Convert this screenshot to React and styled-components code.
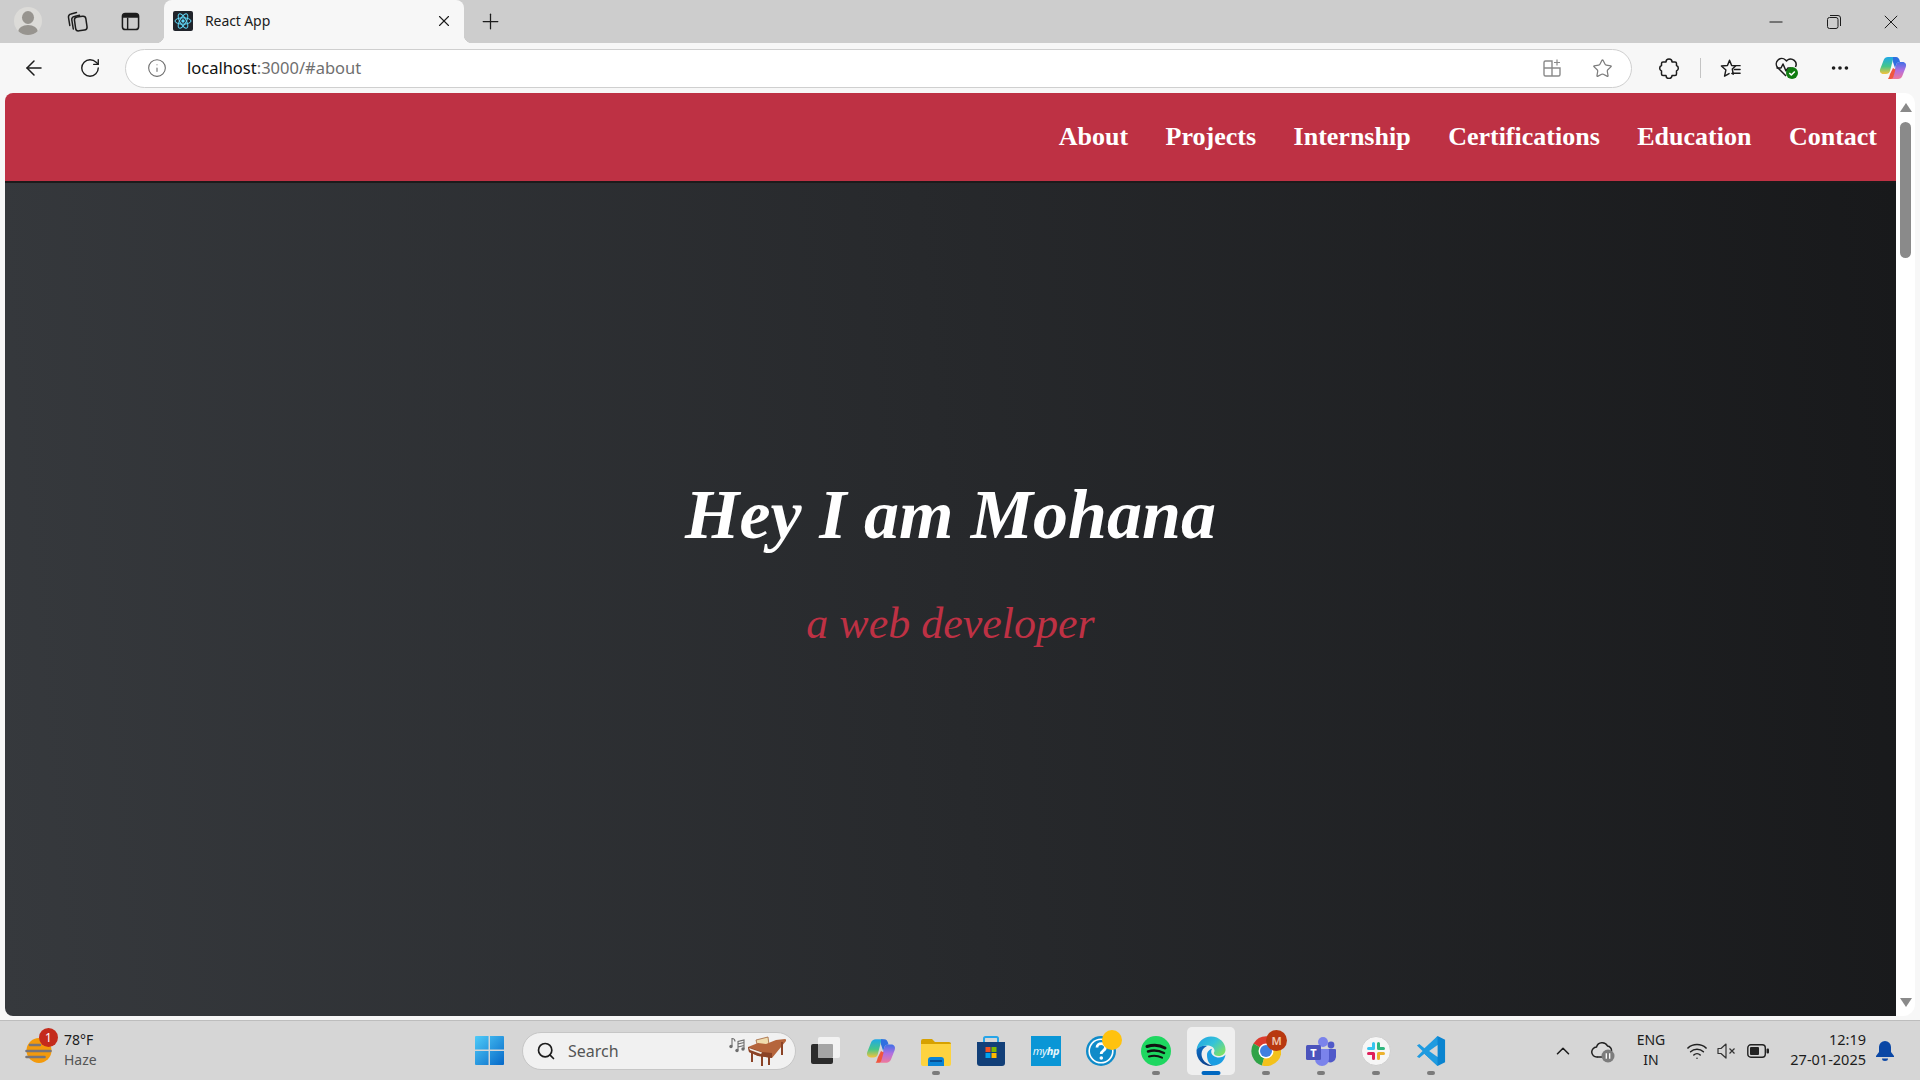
import React from "react";
import styled, { createGlobalStyle } from "styled-components";
import {
  ArrowLeft,
  RotateCw,
  Info,
  Star,
  X,
  Plus,
  Ellipsis,
  Search,
  ChevronUp,
  Wifi,
} from "lucide-react";

const RED = "#be3144";
const UI_FONT = `"Noto Sans", "Open Sans", sans-serif`;
const PAGE_FONT = `"Liberation Serif", "Times New Roman", serif`;

const GlobalStyle = createGlobalStyle`
  html, body, #root {
    margin: 0;
    height: 100%;
    overflow: hidden;
  }
  * { box-sizing: border-box; }
`;

const NAV_LINKS = ["About", "Projects", "Internship", "Certifications", "Education", "Contact"];

const Screen = styled.div`
  display: flex;
  flex-direction: column;
  width: 1920px;
  height: 1080px;
  background: #f7f7f7;
  font-family: ${UI_FONT};
  color: #1c1c1c;
`;

/* browser chrome */
const TabStrip = styled.div`
  display: flex;
  align-items: center;
  height: 43px;
  padding-left: 8px;
  background: #cdcdcd;
  flex-shrink: 0;
`;

const StripButton = styled.div`
  display: flex;
  align-items: center;
  justify-content: center;
  width: ${p => p.$w || 53}px;
  height: 43px;
  padding-bottom: 1px;
`;

const Avatar = styled.div`
  width: 28px;
  height: 28px;
  border-radius: 50%;
  background: #dcdbd8;
  overflow: hidden;
`;

const AvatarHead = styled.div`
  width: 12px;
  height: 13px;
  margin: 4px auto 1px;
  border-radius: 50%;
  background: #97948f;
`;

const AvatarBody = styled.div`
  width: 20px;
  height: 14px;
  margin: 0 auto;
  border-radius: 50%;
  background: #97948f;
`;

const Tab = styled.div`
  position: relative;
  display: flex;
  align-items: center;
  width: 300px;
  height: 43px;
  margin-left: 10px;
  padding: 0 11px 2px 9px;
  border-radius: 8px 8px 0 0;
  background: #f7f7f7;

  &::before,
  &::after {
    content: "";
    position: absolute;
    bottom: 0;
    width: 8px;
    height: 8px;
  }
  &::before {
    left: -8px;
    background: radial-gradient(circle at 0 0, transparent 8px, #f7f7f7 8.5px);
  }
  &::after {
    right: -8px;
    background: radial-gradient(circle at 100% 0, transparent 8px, #f7f7f7 8.5px);
  }
`;

const TabTitle = styled.span`
  flex: 1;
  margin-left: 12px;
  font-size: 14px;
  letter-spacing: -0.1px;
`;

const WindowControls = styled.div`
  display: flex;
  margin-left: auto;
`;

const WindowButton = styled.div`
  display: flex;
  align-items: center;
  justify-content: center;
  width: 57.5px;
  height: 43px;
`;

const Toolbar = styled.div`
  display: flex;
  align-items: center;
  height: 50px;
  flex-shrink: 0;
  padding: 0 0 0 6px;
  background: #f7f7f7;
`;

const ToolButton = styled.div`
  display: flex;
  align-items: center;
  justify-content: center;
  width: ${p => p.$w || 56}px;
  height: 40px;
  padding-left: ${p => p.$pad || 0}px;
  flex-shrink: 0;
`;

const AddressBar = styled.div`
  display: flex;
  align-items: center;
  width: 1507px;
  height: 39px;
  margin-left: 7px;
  padding-left: 21px;
  flex-shrink: 0;
  border: 1px solid #cfcfcf;
  border-radius: 20px;
  background: #fff;
  font-size: 16.5px;
`;

const Host = styled.span`
  margin: 0 0 2px 20px;
  color: #111;
`;

const UrlRest = styled.span`
  color: #6f6f6f;
`;

const AddressActions = styled.div`
  display: flex;
  align-items: center;
  margin-left: auto;
  padding-right: 4px;
`;

const Separator = styled.div`
  width: 1px;
  height: 20px;
  background: #c4c4c4;
  flex-shrink: 0;
`;

/* page */
const Viewport = styled.div`
  flex: 1;
  min-height: 0;
  display: flex;
  padding: 0 5px 4px;
`;

const PageArea = styled.main`
  flex: 1;
  min-width: 0;
  display: flex;
  flex-direction: column;
  overflow: hidden;
  border-radius: 8px 0 0 8px;
  font-family: ${PAGE_FONT};
`;

const NavBar = styled.nav`
  display: flex;
  align-items: center;
  justify-content: flex-end;
  gap: 37.5px;
  height: 90px;
  flex-shrink: 0;
  padding-right: 19px;
  background: ${RED};
  border-bottom: 2px solid #1d1a1b;
`;

const NavLink = styled.a`
  color: #fff;
  font-size: 26px;
  font-weight: 700;
  text-decoration: none;
`;

const Hero = styled.section`
  flex: 1;
  display: flex;
  flex-direction: column;
  align-items: center;
  justify-content: center;
  padding-bottom: 77px;
  background: linear-gradient(85deg, #36393d, #18191b);
`;

const Title = styled.h1`
  margin: 0;
  color: #fff;
  font-size: 70px;
  font-style: italic;
  font-weight: 700;
  line-height: 83px;
`;

const Subtitle = styled.p`
  margin: 43px 0 0;
  color: ${RED};
  font-size: 44px;
  font-style: italic;
  line-height: 50px;
`;

const Scrollbar = styled.div`
  display: flex;
  flex-direction: column;
  align-items: center;
  width: 19px;
  flex-shrink: 0;
  padding: 10px 0 9px;
  border-radius: 0 10px 12px 0;
  background: #fff;
`;

const ScrollArrow = styled.div`
  width: 0;
  height: 0;
  border-left: 6px solid transparent;
  border-right: 6px solid transparent;
  ${p =>
    p.$down
      ? "border-top: 9px solid #8a8a8a; margin-top: auto;"
      : "border-bottom: 9px solid #8a8a8a;"}
`;

const ScrollThumb = styled.div`
  width: 11px;
  height: 136px;
  margin-top: 10px;
  border-radius: 6px;
  background: #8a8a8a;
`;

/* taskbar */
const Taskbar = styled.footer`
  display: flex;
  align-items: center;
  height: 60px;
  flex-shrink: 0;
  border-top: 1px solid #bdbdbd;
  background: #d6d6d6;
`;

const Weather = styled.div`
  position: relative;
  display: flex;
  align-items: center;
  gap: 12px;
  width: 464px;
  height: 59px;
  padding-left: 25px;
  flex-shrink: 0;
`;

const WeatherBadge = styled.div`
  position: absolute;
  left: 39px;
  top: 7px;
  width: 19px;
  height: 19px;
  border-radius: 50%;
  background: #c42b1c;
  color: #fff;
  font-size: 12px;
  line-height: 19px;
  text-align: center;
`;

const WeatherText = styled.div`
  display: flex;
  flex-direction: column;
  margin-bottom: 2px;
  font-size: 14px;
  line-height: 20px;
`;

const Muted = styled.span`
  color: #555;
`;

const TaskSlot = styled.div`
  display: flex;
  align-items: center;
  justify-content: center;
  width: ${p => p.$w || 55}px;
  flex-shrink: 0;
`;

const Tile = styled.div`
  position: relative;
  display: flex;
  align-items: center;
  justify-content: center;
  width: 48px;
  height: 48px;
  border-radius: 5px;
  background: ${p => (p.$active ? "#efefef" : "transparent")};
`;

const RunDot = styled.div`
  position: absolute;
  left: 50%;
  bottom: 0;
  width: ${p => (p.$active ? 19 : 8)}px;
  height: 4px;
  transform: translateX(-50%);
  border-radius: 2px;
  background: ${p => (p.$active ? "#0067c0" : "#7b7b7b")};
`;

const SearchBox = styled.div`
  display: flex;
  align-items: center;
  width: 274px;
  height: 38px;
  margin: 0 2.5px 0 8px;
  padding: 0 9px 0 13px;
  border: 1px solid #c6c6c6;
  border-radius: 19px;
  background: #f1f1f1;
  color: #555;
  font-size: 16px;
  flex-shrink: 0;
`;

const SearchLabel = styled.span`
  flex: 1;
  margin-left: 12px;
`;

const Tray = styled.div`
  display: flex;
  align-items: center;
  margin-left: auto;
  padding-right: 20px;
`;

const TrayItem = styled.div`
  display: flex;
  align-items: center;
  justify-content: center;
  width: ${p => p.$w || 30}px;
  height: 40px;
`;

const Lang = styled.div`
  width: 52px;
  margin: 0 5px 1px 0;
  font-size: 14px;
  line-height: 20px;
  text-align: center;
`;

const Clock = styled.div`
  width: 92px;
  margin: 0 4px 3px 0;
  font-size: 14.5px;
  line-height: 20px;
  text-align: right;
`;

const MailBadge = styled.div`
  position: absolute;
  right: 3px;
  top: 3px;
  width: 21px;
  height: 21px;
  border-radius: 50%;
  background: #b8380f;
  color: #f0c9b2;
  font-size: 11px;
  font-weight: 600;
  line-height: 21px;
  text-align: center;
`;

const YellowDot = styled.div`
  position: absolute;
  right: 3px;
  top: 3px;
  width: 20px;
  height: 20px;
  border-radius: 50%;
  background: #ffc20e;
`;

const MyHp = styled.div`
  width: 30px;
  height: 30px;
  background: #0a96d6;
  color: #e8f6fc;
  font-size: 11px;
  font-style: italic;
  line-height: 30px;
  letter-spacing: -0.4px;
  text-align: center;
`;

const Ico = ({ size = 20, vb = 24, children }) => (
  <svg width={size} height={size} viewBox={`0 0 ${vb} ${vb}`} fill="none" stroke="#1c1c1c" strokeWidth="1.5" strokeLinejoin="round" strokeLinecap="round">
    {children}
  </svg>
);

const Favicon = () => (
  <svg width="20" height="20" viewBox="0 0 20 20">
    <rect width="20" height="20" rx="2" fill="#20232a" />
    <g fill="none" stroke="#61dafb" strokeWidth="1">
      <ellipse cx="10" cy="10" rx="8" ry="3.2" />
      <ellipse cx="10" cy="10" rx="8" ry="3.2" transform="rotate(60 10 10)" />
      <ellipse cx="10" cy="10" rx="8" ry="3.2" transform="rotate(120 10 10)" />
    </g>
    <circle cx="10" cy="10" r="1.7" fill="#61dafb" />
  </svg>
);

const CollectionsIcon = () => (
  <Ico size={22} vb={22}>
    <rect x="9" y="6.500" width="11.500" height="14" rx="3" transform="rotate(-8 15 13.500)" />
    <path d="M7.300 19 5.800 10a3 3 0 0 1 2.500-3.500l5.200-1.200" />
    <path d="M3.800 15.500 2.500 7.500A3 3 0 0 1 5 4l5.500-1.500" />
  </Ico>
);

const VerticalTabsIcon = () => (
  <svg width="19" height="19" viewBox="0 0 20 20">
    <rect x="1.500" y="1.500" width="17" height="17" rx="3" fill="none" stroke="#1c1c1c" strokeWidth="1.600" />
    <path d="M2 3.500A1.500 1.500 0 0 1 3.500 2h13A1.500 1.500 0 0 1 18 3.500V6H2z" fill="#1c1c1c" />
    <path d="M7 6v12" stroke="#1c1c1c" strokeWidth="1.500" />
  </svg>
);

const MinimizeIcon = () => (
  <svg width="14" height="14" viewBox="0 0 14 14">
    <path d="M.500 7h13" stroke="#1c1c1c" strokeWidth="1" />
  </svg>
);

const RestoreIcon = () => (
  <svg width="14" height="14" viewBox="0 0 14 14" fill="none" stroke="#1c1c1c" strokeWidth="1">
    <rect x="0.500" y="2.500" width="10.500" height="11" rx="2" />
    <path d="M3 .5h8A2.500 2.500 0 0 1 13.500 3v8" />
  </svg>
);

const CloseIcon = () => (
  <svg width="14" height="14" viewBox="0 0 14 14">
    <path d="M.800.800l12.400 12.400M13.200.800.800 13.200" stroke="#1c1c1c" strokeWidth="1" />
  </svg>
);

const AppAddIcon = () => (
  <svg width="20" height="20" viewBox="0 0 20 20" fill="none" stroke="#8a8a8a" strokeWidth="1.400">
    <path d="M2 10V4.500A1.500 1.500 0 0 1 3.500 3H10v15H3.500A1.500 1.500 0 0 1 2 16.500zM2 10h16v6.500a1.500 1.500 0 0 1-1.500 1.500H10" />
    <path d="M15 1.500v6M12 4.500h6" strokeWidth="1.200" />
  </svg>
);

const PuzzleIcon = () => (
  <Ico size={22} vb={22}>
    <path d="M8 5a3 3 0 0 1 6 0h3a1.500 1.500 0 0 1 1.500 1.500v2a3 3 0 0 1 0 5.500v3a1.500 1.500 0 0 1-1.500 1.500h-3a3 3 0 0 1-6 0H5a1.500 1.500 0 0 1-1.500-1.500v-3a3 3 0 0 1 0-5.500v-2A1.500 1.500 0 0 1 5 5z" />
  </Ico>
);

const FavoritesIcon = () => (
  <Ico size={23}>
    <path d="M11 3.500 13.200 8.800l4.300.3-3.600 3.500 1 5.400-1.500-.9M11 3.500 8.800 8.800 2.500 9.400l4.700 4.100L5.800 20l4.700-2.700" />
    <path d="M16.500 9H22M16 13h6M14.500 17H22" />
  </Ico>
);

const HealthIcon = () => (
  <svg width="26" height="26" viewBox="0 0 26 26" fill="none" stroke="#1c1c1c" strokeWidth="1.500" strokeLinejoin="round">
    <path d="M12 21 3.500 12.500a5.500 5.500 0 0 1 8-7.500l1 1 1-1a5.500 5.500 0 0 1 8 7" />
    <path d="M2.500 13H7l2-4 3 7 2-3h3" />
    <circle cx="18" cy="18" r="6" fill="#107c10" stroke="none" />
    <path d="m15.300 18 2 2 3.500-3.500" stroke="#fff" strokeWidth="1.600" />
  </svg>
);

const CopilotIcon = ({ size = 28, id = "cp" }) => (
  <svg width={size} height={size} viewBox="0 0 28 28">
    <defs>
      <linearGradient id={`${id}A`} x1="0" y1="0" x2="0" y2="1">
        <stop offset="0" stopColor="#1fa8e8" />
        <stop offset="0.55" stopColor="#45c68a" />
        <stop offset="1" stopColor="#f5c33c" />
      </linearGradient>
      <linearGradient id={`${id}B`} x1="0" y1="0" x2="0" y2="1">
        <stop offset="0" stopColor="#3f6fe8" />
        <stop offset="0.5" stopColor="#b06fe0" />
        <stop offset="1" stopColor="#f0789a" />
      </linearGradient>
    </defs>
    <path d="M9 3h8c-1.500 0-2.600 1-3 2.500L11 17c-.5 2-2 3-4 3H4.500C1.500 20 .3 17.500 1.200 15l3.500-9C5.300 4.200 7 3 9 3z" fill={`url(#${id}A)`} />
    <path d="M19 25h-8c1.500 0 2.600-1 3-2.500L17 11c.5-2 2-3 4-3h2.500c3 0 4.200 2.500 3.300 5l-3.500 9c-.6 1.800-2.300 3-4.300 3z" fill={`url(#${id}B)`} />
    <path d="M14 3h3c2 0 3.500 1.500 4 5-2 0-3.500 1-4 3l-1 3-2-6z" fill="#2f6fe0" />
    <path d="M14 14l-3 6c-.5 2-1 3.500-2 5h3c1.500 0 2-1 2.500-2.500l2-7z" fill="#f0563f" />
  </svg>
);

const WeatherIcon = () => (
  <svg width="27" height="25" viewBox="0 0 27 25">
    <circle cx="14" cy="12.500" r="12.500" fill="#f39a0c" />
    <path d="M5 7h10M1.500 13h24M1.500 19h18" stroke="#77757a" strokeWidth="2.600" strokeLinecap="round" />
  </svg>
);

const WindowsIcon = () => (
  <svg width="29" height="29" viewBox="0 0 30 30">
    <defs>
      <linearGradient id="winG" x1="0" y1="0" x2="1" y2="1">
        <stop offset="0" stopColor="#4fcbf8" />
        <stop offset="1" stopColor="#0668c8" />
      </linearGradient>
    </defs>
    <path d="M0 1a1 1 0 0 1 1-1h13v14H0zM15.500 0H29a1 1 0 0 1 1 1v13H15.500zM0 15.500h14V30H1a1 1 0 0 1-1-1zM15.500 15.500H30V29a1 1 0 0 1-1 1H15.500z" fill="url(#winG)" />
  </svg>
);

const PianoIcon = () => (
  <svg width="58" height="30" viewBox="0 0 58 30">
    <g fill="none" stroke="#6d6d6d" strokeWidth="1.100">
      <path d="M4 10V2.500c2 0 3 1 3 3M10 14V5.500l6-1.500v9M10 8l6-1.500M10 11l6-1.500" />
    </g>
    <circle cx="3" cy="10.500" r="1.700" fill="#6d6d6d" />
    <circle cx="9" cy="14.500" r="1.700" fill="#6d6d6d" />
    <circle cx="15" cy="13" r="1.700" fill="#6d6d6d" />
    <path d="M28 4l12-3 1 8-11 3z" fill="#f0dcae" stroke="#a0623a" strokeWidth="0.800" />
    <path d="M20 11 30 7l8 1 10-4 9-1c1 0 1.500 1 1 2L44 22l-14-2-9-4z" fill="#b5653c" />
    <path d="M20 11l14 5 10 1v5l-14-2-9-4z" fill="#8b4326" />
    <path d="M21 12l13 4.500L33 18l-11-4z" fill="#f1ece4" />
    <path d="M24 16v10M34 20v10M41 20v9M54 6v13" stroke="#8b4326" strokeWidth="2" />
  </svg>
);

const TaskViewIcon = () => (
  <svg width="30" height="28" viewBox="0 0 30 28">
    <rect x="0" y="7" width="22" height="20" rx="2" fill="#2b2b2b" />
    <rect x="7" y="0" width="22" height="21" rx="2" fill="#f2f2f2" />
    <rect x="7" y="7" width="15" height="14" rx="1" fill="#a5a5a5" />
  </svg>
);

const FolderIcon = () => (
  <svg width="30" height="30" viewBox="0 0 30 30">
    <path d="M0 5a2 2 0 0 1 2-2h9l3 3h14a2 2 0 0 1 2 2v4H0z" fill="#d7a100" />
    <path d="M0 8h30v20a2 2 0 0 1-2 2H2a2 2 0 0 1-2-2z" fill="#fdd33f" />
    <path d="M7 30v-6a3 3 0 0 1 3-3h10a3 3 0 0 1 3 3v6z" fill="#0a84d6" />
    <path d="M9 25h12" stroke="#063f80" strokeWidth="1.500" />
  </svg>
);

const StoreIcon = () => (
  <svg width="30" height="30" viewBox="0 0 30 30">
    <path d="M8 7V2.500a1.500 1.500 0 0 1 1.500-1.500h11A1.500 1.500 0 0 1 22 2.500V7" fill="none" stroke="#27a5e8" strokeWidth="2" />
    <path d="M1 6h28v21a3 3 0 0 1-3 3H4a3 3 0 0 1-3-3z" fill="#123f78" />
    <rect x="9.500" y="11" width="5" height="5" fill="#f25022" />
    <rect x="15.500" y="11" width="5" height="5" fill="#7fba00" />
    <rect x="9.500" y="17" width="5" height="5" fill="#00a4ef" />
    <rect x="15.500" y="17" width="5" height="5" fill="#ffb900" />
  </svg>
);

const HelpIcon = () => (
  <svg width="30" height="30" viewBox="0 0 30 30">
    <circle cx="15" cy="15" r="15" fill="#0f8bc9" />
    <circle cx="15" cy="15" r="12.600" fill="#fff" />
    <circle cx="15" cy="15" r="11" fill="#0f8bc9" />
    <path d="M11 11.500c0-5 8.500-5 8.500-.2 0 3.500-4.300 3-4.300 6.700" fill="none" stroke="#fff" strokeWidth="2.800" />
    <circle cx="15.300" cy="22" r="1.800" fill="#fff" />
  </svg>
);

const SpotifyIcon = () => (
  <svg width="30" height="30" viewBox="0 0 30 30">
    <circle cx="15" cy="15" r="15" fill="#1ed760" />
    <g fill="none" stroke="#121212" strokeLinecap="round">
      <path d="M6 10.500c6-2 13-1.500 18 1.500" strokeWidth="3" />
      <path d="M7 15.500c5-1.500 11-1 16 1.500" strokeWidth="2.500" />
      <path d="M8 20.500c4-1 9-.8 13 1.200" strokeWidth="2" />
    </g>
  </svg>
);

const EdgeIcon = () => (
  <svg width="30" height="30" viewBox="0 0 30 30">
    <defs>
      <linearGradient id="edgeA" x1="0" y1="0" x2="1" y2="0.700">
        <stop offset="0" stopColor="#1f9fe6" />
        <stop offset="0.550" stopColor="#35c3d8" />
        <stop offset="1" stopColor="#7be06a" />
      </linearGradient>
      <linearGradient id="edgeB" x1="0" y1="0" x2="0.500" y2="1">
        <stop offset="0" stopColor="#0c70c8" />
        <stop offset="1" stopColor="#0b3f8a" />
      </linearGradient>
    </defs>
    <path d="M.500 14C1.500 6 7.500.500 15 .500c8.500 0 14.500 6.500 14.500 13 0 4.200-3 6.500-6.800 6.500-3 0-4.800-1.200-4.800-2.800 0-.8.600-1.200.600-2.400 0-3-3-5.300-7-5.300C6.500 9.500 2.500 11 .500 14z" fill="url(#edgeA)" />
    <path d="M.500 14c1.600-2.500 6-4.800 10.500-4-3.500 1.500-5.500 4.500-5.500 8 0 5.500 4.500 10.500 11 11.500.800.100 1.300.200 2 .200-1 .200-2 .300-3.500.300C7 30 0 23.500.500 14z" fill="url(#edgeB)" />
    <path d="M11 19c0-3.400 2.300-5.600 5.200-6.300-.800 1-1 1.800-1 3 0 3.200 3.500 5.800 7.800 5.800 2.600 0 5.300-1 6.500-3-.7 5.500-5 10.500-11 11C13.500 30 11 24.500 11 19z" fill="#1b9de2" />
  </svg>
);

const ChromeIcon = () => (
  <svg width="30" height="30" viewBox="0 0 30 30">
    <path d="M15 15 2.500 7.500A15 15 0 0 1 28.500 8z" fill="#db3b2e" />
    <path d="M15 15 2.500 7.500A15 15 0 0 0 11 29.500z" fill="#2fa347" />
    <path d="M15 15 28.500 8A15 15 0 0 1 11 29.500z" fill="#f3c11b" />
    <circle cx="15" cy="15" r="7.500" fill="#fff" />
    <circle cx="15" cy="15" r="6" fill="#3f7fe0" />
  </svg>
);

const TeamsIcon = () => (
  <svg width="30" height="30" viewBox="0 0 30 30">
    <circle cx="17" cy="6" r="5" fill="#7b83eb" />
    <circle cx="25" cy="9" r="3.400" fill="#5059c9" />
    <path d="M20 13h9a1 1 0 0 1 1 1v7a6 6 0 0 1-8 5z" fill="#5059c9" />
    <path d="M9 13h13a1 1 0 0 1 1 1v9a7 7 0 0 1-14 0z" fill="#7b83eb" />
    <rect x="0" y="9" width="15" height="15" rx="1.500" fill="#4b53bc" />
    <text x="7.500" y="20.500" fill="#fff" fontSize="11" fontWeight="700" textAnchor="middle" fontFamily="Noto Sans, sans-serif">T</text>
  </svg>
);

const SlackIcon = () => (
  <svg width="30" height="30" viewBox="0 0 30 30">
    <circle cx="15" cy="15" r="14.500" fill="#f6f6f6" stroke="#cfcfcf" />
    <g strokeWidth="3" strokeLinecap="round">
      <path d="M12.500 7.500v5M7.500 12.500h5" stroke="#36c5f0" />
      <path d="M22.500 12.500h-5M17.500 7.500v5" stroke="#2eb67d" />
      <path d="M17.500 22.500v-5M22.500 17.500h-5" stroke="#ecb22e" />
      <path d="M7.500 17.500h5M12.500 17.500v5" stroke="#e01e5a" />
    </g>
  </svg>
);

const VsCodeIcon = () => (
  <svg width="30" height="30" viewBox="0 0 30 32">
    <path d="M22 0 30 4v24l-8 4L8 19z" fill="#0a84d0" />
    <path d="M22 0v32L8 19 2.500 23.500 0 22l6-6-6-6 2.500-1.500L8 13z" fill="#1f9be0" />
    <path d="M22 9.500 13 16l9 6.500z" fill="#d6d6d6" />
  </svg>
);

const CloudIcon = () => (
  <svg width="24" height="24" viewBox="0 0 24 24">
    <path d="M6 18a5 5 0 0 1-.5-10 6 6 0 0 1 11-1 4.500 4.500 0 0 1 4 5" fill="#dcdcdc" stroke="#222" strokeWidth="1.500" strokeLinecap="round" />
    <path d="M6 18h6" stroke="#222" strokeWidth="1.500" />
    <circle cx="17" cy="17" r="6.500" fill="#7d7d7d" />
    <path d="M15.300 14.200v5.600M18.700 14.200v5.600" stroke="#fff" strokeWidth="1.300" />
  </svg>
);

const MutedIcon = () => (
  <svg width="20" height="20" viewBox="0 0 20 20" fill="none" stroke="#333" strokeWidth="1.200" strokeLinejoin="round">
    <path d="M1 7.500v5h3l5 4.500V3L4 7.500z" />
    <path d="m12.500 7.500 5 5M17.500 7.500l-5 5" />
  </svg>
);

const BatteryIcon = () => (
  <svg width="22" height="14" viewBox="0 0 22 14">
    <rect x="0.800" y="0.800" width="17.500" height="12.400" rx="3" fill="none" stroke="#222" strokeWidth="1.400" />
    <rect x="3" y="3" width="9" height="8" rx="1" fill="#222" />
    <rect x="19.500" y="4.500" width="2.500" height="5" rx="1" fill="#222" />
  </svg>
);

const BellIcon = () => (
  <svg width="18" height="20" viewBox="0 0 18 20" fill="#0a47a5">
    <path d="M9 0a6 6 0 0 1 6 6v5l3 4v1H0v-1l3-4V6a6 6 0 0 1 6-6z" />
    <path d="M6 17.500h6a3 2.500 0 0 1-6 0z" />
  </svg>
);

const PINNED = [
  { key: "task", icon: <TaskViewIcon /> },
  { key: "copilot", icon: <CopilotIcon size={30} id="cpTask" /> },
  { key: "files", icon: <FolderIcon />, running: true },
  { key: "store", icon: <StoreIcon /> },
  { key: "hp", icon: <MyHp>my<b>hp</b></MyHp> },
  { key: "help", icon: <HelpIcon />, extra: <YellowDot /> },
  { key: "spotify", icon: <SpotifyIcon />, running: true },
  { key: "edge", icon: <EdgeIcon />, running: true, active: true },
  { key: "chrome", icon: <ChromeIcon />, running: true, extra: <MailBadge>M</MailBadge> },
  { key: "teams", icon: <TeamsIcon />, running: true },
  { key: "slack", icon: <SlackIcon />, running: true },
  { key: "vscode", icon: <VsCodeIcon />, running: true },
];

export default function App() {
  return (
    <Screen>
      <GlobalStyle />
      <TabStrip>
        <StripButton $w={40}>
          <Avatar>
            <AvatarHead />
            <AvatarBody />
          </Avatar>
        </StripButton>
        <StripButton $w={58}>
          <CollectionsIcon />
        </StripButton>
        <StripButton $w={48}>
          <VerticalTabsIcon />
        </StripButton>
        <Tab>
          <Favicon />
          <TabTitle>React App</TabTitle>
          <X size={18} strokeWidth={1.5} color="#1c1c1c" />
        </Tab>
        <StripButton $w={53}>
          <Plus size={25} strokeWidth={1.2} color="#1c1c1c" />
        </StripButton>
        <WindowControls>
          <WindowButton>
            <MinimizeIcon />
          </WindowButton>
          <WindowButton>
            <RestoreIcon />
          </WindowButton>
          <WindowButton>
            <CloseIcon />
          </WindowButton>
        </WindowControls>
      </TabStrip>

      <Toolbar>
        <ToolButton>
          <ArrowLeft size={24} strokeWidth={1.5} color="#1c1c1c" />
        </ToolButton>
        <ToolButton>
          <RotateCw size={22} strokeWidth={1.5} color="#1c1c1c" />
        </ToolButton>
        <AddressBar>
          <Info size={20} strokeWidth={1.3} color="#6b6b6b" />
          <Host>
            localhost<UrlRest>:3000/#about</UrlRest>
          </Host>
          <AddressActions>
            <ToolButton $w={50}>
              <AppAddIcon />
            </ToolButton>
            <ToolButton $w={50}>
              <Star size={21} strokeWidth={1.4} color="#7d7d7d" />
            </ToolButton>
          </AddressActions>
        </AddressBar>
        <ToolButton $w={68} $pad={6}>
          <PuzzleIcon />
        </ToolButton>
        <Separator />
        <ToolButton $w={58}>
          <FavoritesIcon />
        </ToolButton>
        <ToolButton $w={55}>
          <HealthIcon />
        </ToolButton>
        <ToolButton $w={52}>
          <Ellipsis size={22} strokeWidth={2} color="#1c1c1c" />
        </ToolButton>
        <ToolButton $w={54}>
          <CopilotIcon />
        </ToolButton>
      </Toolbar>

      <Viewport>
        <PageArea>
          <NavBar>
            {NAV_LINKS.map(link => (
              <NavLink key={link} href={`#${link.toLowerCase()}`}>
                {link}
              </NavLink>
            ))}
          </NavBar>
          <Hero>
            <Title>Hey I am Mohana</Title>
            <Subtitle>a web developer</Subtitle>
          </Hero>
        </PageArea>
        <Scrollbar>
          <ScrollArrow />
          <ScrollThumb />
          <ScrollArrow $down />
        </Scrollbar>
      </Viewport>

      <Taskbar>
        <Weather>
          <WeatherIcon />
          <WeatherBadge>1</WeatherBadge>
          <WeatherText>
            <span>78°F</span>
            <Muted>Haze</Muted>
          </WeatherText>
        </Weather>
        <TaskSlot $w={50}>
          <WindowsIcon />
        </TaskSlot>
        <SearchBox>
          <Search size={20} strokeWidth={2} color="#1c1c1c" />
          <SearchLabel>Search</SearchLabel>
          <PianoIcon />
        </SearchBox>
        {PINNED.map(item => (
          <TaskSlot key={item.key}>
            <Tile $active={item.active}>
              {item.icon}
              {item.extra}
              {item.running && <RunDot $active={item.active} />}
            </Tile>
          </TaskSlot>
        ))}
        <Tray>
          <TrayItem $w={36}>
            <ChevronUp size={22} strokeWidth={1.7} color="#1c1c1c" />
          </TrayItem>
          <TrayItem $w={44}>
            <CloudIcon />
          </TrayItem>
          <Lang>
            ENG
            <br />
            IN
          </Lang>
          <TrayItem>
            <Wifi size={22} strokeWidth={1.6} color="#222" />
          </TrayItem>
          <TrayItem>
            <MutedIcon />
          </TrayItem>
          <TrayItem $w={32}>
            <BatteryIcon />
          </TrayItem>
          <Clock>
            12:19
            <br />
            27-01-2025
          </Clock>
          <TrayItem>
            <BellIcon />
          </TrayItem>
        </Tray>
      </Taskbar>
    </Screen>
  );
}
